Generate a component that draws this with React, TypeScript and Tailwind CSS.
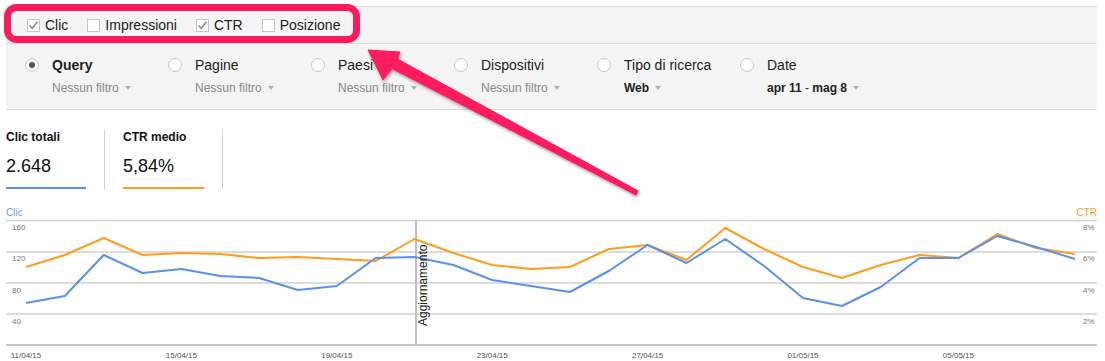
import React from "react";

const blue = [301, 294, 253, 271, 267, 274, 276, 288, 284, 256, 255, 263, 278, 284, 290, 269, 243, 261, 237, 264, 296, 304, 285, 256, 256, 234, 245, 257];
const orange = [265, 253, 236, 253, 251, 252, 256, 255, 257, 259, 237, 251, 263, 267, 265, 247, 243, 258, 226, 247, 265, 276, 263, 253, 256, 232, 246, 252];
const xAt = (i: number) => 26 + i * 38.85;
const pts = (arr: number[]) => arr.map((y, i) => `${xAt(i).toFixed(1)},${y}`).join(" ");

function Checkbox({ checked, label }: { checked: boolean; label: string }) {
  return (
    <div className="flex items-center gap-[5px]">
      <div className="w-[13px] h-[13px] border border-[#c4c4c4] bg-white flex items-center justify-center">
        {checked && (
          <svg width="11" height="11" viewBox="0 0 11 11">
            <path d="M1.5 5.5 L4.2 8.3 L9.5 1.8" fill="none" stroke="#8a8a8a" strokeWidth="1.5" />
          </svg>
        )}
      </div>
      <span className="text-[14px] text-[#222] leading-none">{label}</span>
    </div>
  );
}

function Caret() {
  return <span className="inline-block ml-[6px] w-0 h-0 border-l-[3.5px] border-r-[3.5px] border-t-[4px] border-l-transparent border-r-transparent border-t-[#b0b0b0] align-middle relative top-[-1px]" />;
}

function FilterCol({ label, sub, selected, bold, subNode }: { label: string; sub?: string; selected?: boolean; bold?: boolean; subNode?: React.ReactNode }) {
  return (
    <div className="w-[143px] flex gap-[13px] shrink-0">
      <div className="w-[14px] h-[14px] rounded-full border border-[#c8c8c8] bg-white flex items-center justify-center mt-[2px]">
        {selected && <div className="w-[6px] h-[6px] rounded-full bg-[#555]" />}
      </div>
      <div className="flex flex-col">
        <div className={`text-[14px] leading-[18px] text-[#222] ${selected ? "font-bold" : ""}`}>{label}</div>
        <div className={`mt-[6px] text-[12px] leading-[16px] whitespace-nowrap ${bold ? "text-[#222] font-bold" : "text-[#888]"}`}>
          {subNode ?? sub}
          <Caret />
        </div>
      </div>
    </div>
  );
}

export default function App() {
  return (
    <div className="relative w-[1105px] h-[361px] overflow-hidden bg-white" style={{ fontFamily: '"Liberation Sans", Arial, sans-serif' }}>
      <div className="pt-[6px] pl-[6px] w-[1097px]">
        <div className="bg-[#f4f4f4]">
          <div className="h-[37px] border-t border-[#d9d9d9] flex items-center pl-[21px] gap-[19px]">
            <Checkbox checked label="Clic" />
            <Checkbox checked={false} label="Impressioni" />
            <Checkbox checked label="CTR" />
            <Checkbox checked={false} label="Posizione" />
          </div>
          <div className="h-[67px] border-t border-b border-[#d9d9d9] flex pl-[19px] pt-[12px]">
            <FilterCol label="Query" sub="Nessun filtro" selected />
            <FilterCol label="Pagine" sub="Nessun filtro" />
            <FilterCol label="Paesi" sub="Nessun filtro" />
            <FilterCol label="Dispositivi" sub="Nessun filtro" />
            <FilterCol label="Tipo di ricerca" sub="Web" bold />
            <FilterCol
              label="Date"
              bold
              subNode={
                <span>
                  apr 11 <span className="font-normal">-</span> mag 8
                </span>
              }
            />
          </div>
        </div>
      </div>

      <div className="flex pl-[6px] mt-[20px] h-[59px]">
        <div className="w-[99px] pr-[18px] border-r border-[#d0d0d0] flex flex-col">
          <div className="text-[12px] leading-[14px] font-bold text-[#111] whitespace-nowrap">Clic totali</div>
          <div className="mt-[11px] text-[18px] leading-[22px] text-[#111]">2.648</div>
          <div className="mt-[10px] h-[2px] bg-[#5b8ff0]" />
        </div>
        <div className="w-[118px] pl-[18px] pr-[18px] border-r border-[#d0d0d0] flex flex-col">
          <div className="text-[12px] leading-[14px] font-bold text-[#111] whitespace-nowrap">CTR medio</div>
          <div className="mt-[11px] text-[18px] leading-[22px] text-[#111]">5,84%</div>
          <div className="mt-[10px] h-[2px] bg-[#ff9c1a]" />
        </div>
      </div>

      <svg className="block mt-[13px]" width="1105" height="161" viewBox="0 200 1105 161" style={{ fontFamily: '"Liberation Sans", Arial, sans-serif' }}>
        <text x="6" y="214" fontSize="10" fill="#6f9cf0">Clic</text>
        <text x="1097" y="214" fontSize="10" fill="#ffa033" textAnchor="end">CTR</text>
        {[218.5, 250, 281, 312].map((y) => (
          <line key={y} x1="6" x2="1097" y1={y} y2={y} stroke="#d2d2d2" strokeWidth="1.5" />
        ))}
        <line x1="6" x2="1097" y1="343" y2="343" stroke="#8c8c8c" strokeWidth="1" />
        {[
          ["160", 228],
          ["120", 259],
          ["80", 291],
          ["40", 322],
        ].map(([t, y]) => (
          <text key={t as string} x="12" y={y as number} fontSize="8" fill="#777">{t}</text>
        ))}
        {[
          ["8%", 228],
          ["6%", 259],
          ["4%", 291],
          ["2%", 322],
        ].map(([t, y]) => (
          <text key={t as string} x="1083" y={y as number} fontSize="8" fill="#777">{t}</text>
        ))}
        {["11/04/15", "15/04/15", "19/04/15", "23/04/15", "27/04/15", "01/05/15", "05/05/15"].map((t, k) => (
          <text key={t} x={xAt(k * 4)} y="356" fontSize="8" fill="#555" textAnchor="middle">{t}</text>
        ))}
        <line x1="416" x2="416" y1="218" y2="343" stroke="#bdbdbd" strokeWidth="2" />
        <polyline points={pts(orange)} fill="none" stroke="#ff9c1a" strokeWidth="2" strokeLinejoin="round" />
        <polyline points={pts(blue)} fill="none" stroke="#5a90f0" strokeWidth="2" strokeLinejoin="round" />
        <text x="0" y="0" fontSize="12" fill="#222" transform="translate(427 324) rotate(-90)">Aggiornamento</text>
      </svg>

      <svg className="absolute left-0 top-0 pointer-events-none" width="1105" height="361">
        <defs>
          <filter id="sh" x="-10%" y="-10%" width="130%" height="130%">
            <feDropShadow dx="1" dy="2" stdDeviation="1.5" floodColor="#000" floodOpacity="0.35" />
          </filter>
        </defs>
        <rect x="7.5" y="7.5" width="349" height="32" rx="9" fill="none" stroke="#fc1a5e" strokeWidth="7" />
        <polygon
          filter="url(#sh)"
          fill="#fc1a5e"
          points="368,50 400,52 397.5,59 638,190.8 636,195 392,68.6 383,80"
          strokeLinejoin="round"
          stroke="#fc1a5e"
          strokeWidth="1"
        />
      </svg>
    </div>
  );
}
